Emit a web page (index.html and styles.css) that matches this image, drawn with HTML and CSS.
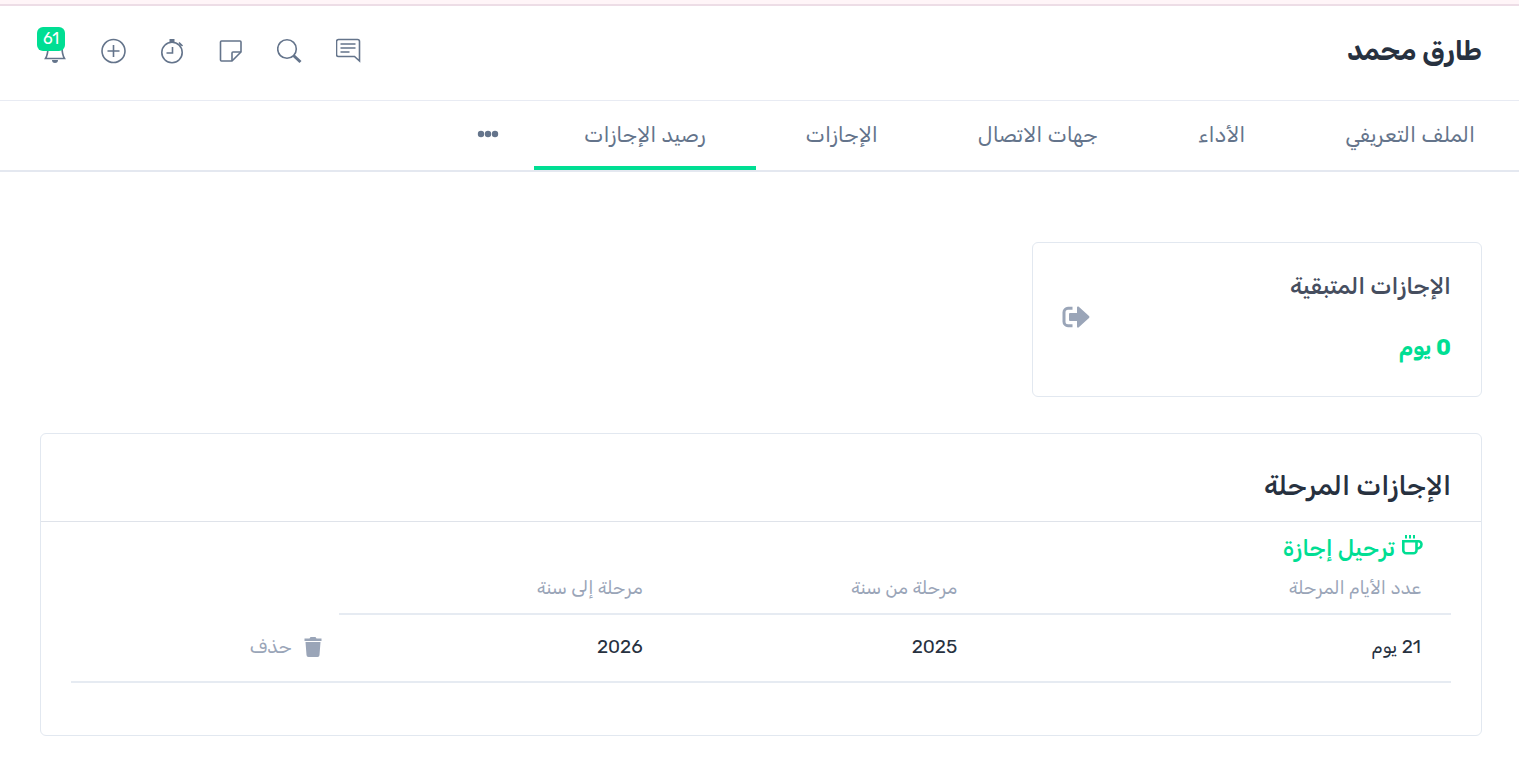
FILE: index.html
```html
<!DOCTYPE html>
<html lang="ar" dir="rtl">
<head>
  <meta charset="utf-8">
  <title>طارق محمد | رصيد الإجازات</title>
  <meta name="viewport" content="width=device-width, initial-scale=1">
  <link rel="stylesheet" href="styles.css">
</head>
<body>
  <div class="top-strip"></div>

  <!-- Header -->
  <header class="header">
    <h1>طارق محمد</h1>
    <div class="toolbar">
      <button class="icon-btn" aria-label="الرسائل">
        <svg width="26" height="26" viewBox="0 0 26 26"><path d="M2.500 1.500h19a2 2 0 0 1 2 2v19.500l-5-4.500h-16a2 2 0 0 1-2-2V3.500a2 2 0 0 1 2-2z"/><path d="M4.500 6h15M4.500 10h15M4.500 14h9"/></svg>
      </button>
      <button class="icon-btn" aria-label="بحث">
        <svg width="26" height="26" viewBox="0 0 26 26"><circle cx="10" cy="11" r="9.300"/><path d="M16.500 17.500l7 6.500" class="thick"/></svg>
      </button>
      <button class="icon-btn" aria-label="ملاحظات">
        <svg width="26" height="26" viewBox="0 0 26 26"><path d="M3.500 3h18.500a1 1 0 0 1 1 1v10l-9 9H3.500a1 1 0 0 1-1-1V4a1 1 0 0 1 1-1z"/><path d="M14 23v-8a1 1 0 0 1 1-1h8"/></svg>
      </button>
      <button class="icon-btn" aria-label="المؤقت">
        <svg width="26" height="26" viewBox="0 0 26 26"><circle cx="13" cy="14.500" r="10.200"/><path d="M13.500 9v6H7.500"/><path d="M10.500 2.500h5" class="thick"/><path d="M20 4.500l3.500 3.500M13 3v2M22 6l-1.500 1.500"/></svg>
      </button>
      <button class="icon-btn" aria-label="إضافة">
        <svg width="26" height="26" viewBox="0 0 26 26"><circle cx="13.500" cy="13" r="11.500"/><path d="M13.500 7v12M7.500 13h12"/></svg>
      </button>
      <button class="icon-btn bell" aria-label="الإشعارات">
        <svg width="26" height="26" viewBox="0 0 26 26"><path d="M14 2a7 7 0 0 0-7 7c0 6-1 9-2.500 11.500h19C22 18 21 15 21 9a7 7 0 0 0-7-7z"/><path d="M11 22h6a3 3 0 0 1-6 0z" class="solid"/></svg>
        <span class="badge">61</span>
      </button>
    </div>
  </header>

  <!-- Tabs -->
  <nav class="tabs">
    <a href="#">الملف التعريفي</a>
    <a href="#">الأداء</a>
    <a href="#">جهات الاتصال</a>
    <a href="#">الإجازات</a>
    <a href="#" class="active">رصيد الإجازات</a>
    <button class="more" aria-label="المزيد">
      <svg width="22" height="8" viewBox="0 0 22 8"><circle cx="4" cy="4" r="3.200"/><circle cx="11" cy="4" r="3.200"/><circle cx="18" cy="4" r="3.200"/></svg>
    </button>
  </nav>

  <main class="content">
    <!-- Remaining leaves -->
    <section class="card balance">
      <div>
        <h3>الإجازات المتبقية</h3>
        <p class="days">0 يوم</p>
      </div>
      <svg class="exit" width="28" height="24" viewBox="0 0 28 24"><path d="M15 2.500q0-1.500 1.500-1L27 11q1 1 0 2L16.500 22.500q-1.500.5-1.500-1v-5.500H8q-1 0-1-1V9q0-1 1-1h7z" class="arrow"/><path d="M10.500 3.300H6a4 4 0 0 0-4 4v9.400a4 4 0 0 0 4 4H10.500"/></svg>
    </section>

    <!-- Carried over leaves -->
    <section class="card carried">
      <h2>الإجازات المرحلة</h2>
      <div class="carried-body">
        <a href="#" class="carry-link">
          <svg width="22" height="28" viewBox="0 0 22 28"><path d="M2.300 7.300h13.200v9a3 3 0 0 1-3 3h-7.200a3 3 0 0 1-3-3z"/><path d="M15.500 7.300h2a3 3 0 0 1 3 3c0 2.700-2 4.200-5 4.200"/><path d="M5 1v3.500M9 1v3.500M13 1v3.500" class="steam"/></svg>
          ترحيل إجازة
        </a>
        <table>
          <thead>
            <tr>
              <th class="col-days">عدد الأيام المرحلة</th>
              <th class="col-from">مرحلة من سنة</th>
              <th class="col-to">مرحلة إلى سنة</th>
              <td class="col-action"></td>
            </tr>
          </thead>
          <tbody>
            <tr>
              <td>21 يوم</td>
              <td>2025</td>
              <td>2026</td>
              <td class="col-action">
                <button class="delete">
                  <svg width="18" height="20" viewBox="0 0 18 20"><path d="M.500 1.500H5.500L6.500 0h5l1 1.500h5V4H.500z"/><path d="M1.500 5h15l-1 13a2 2 0 0 1-2 2h-9a2 2 0 0 1-2-2z"/></svg>
                  حذف
                </button>
              </td>
            </tr>
          </tbody>
        </table>
      </div>
    </section>
  </main>
</body>
</html>
```
FILE: styles.css
```css
* {
  margin: 0;
  padding: 0;
  box-sizing: border-box;
}

body {
  font-family: Rubik, Roboto, "Noto Sans", "Noto Sans Arabic", sans-serif;
  font-size: 19px;
  background: #fff;
  color: #27313f;
}

button {
  font: inherit;
  background: none;
  border: none;
  cursor: pointer;
}

a {
  text-decoration: none;
}

.top-strip {
  height: 6px;
  background: #fff5f8;
  border-bottom: 2px solid #eddde6;
}

.header {
  display: flex;
  align-items: center;
  justify-content: space-between;
  height: 95px;
  padding: 0 37px 4px 41px;
  border-bottom: 1px solid #e8ebf3;
}

h1 {
  font-size: 27px;
  font-weight: 700;
}

.toolbar {
  display: flex;
  gap: 33px;
}

.icon-btn {
  position: relative;
  display: flex;
}

.icon-btn svg {
  fill: none;
  stroke: #64748b;
  stroke-width: 1.6;
}

.icon-btn .thick {
  stroke-width: 3;
}

.icon-btn .solid {
  fill: #64748b;
  stroke: none;
}

.badge {
  position: absolute;
  top: -11px;
  left: -4px;
  width: 28px;
  height: 24px;
  border-radius: 6px;
  background: #00de93;
  color: #fff;
  font-size: 16px;
  font-weight: 400;
  line-height: 24px;
  text-align: center;
}

.tabs {
  display: flex;
  height: 71px;
  padding-right: 44px;
  border-bottom: 2px solid #e4e8f0;
}

.tabs a {
  padding: 0 50px;
  border-bottom: 4px solid transparent;
  color: #64748b;
  font-size: 21px;
  line-height: 68px;
}

.tabs a:first-child {
  padding-right: 0;
}

.tabs a.active {
  border-color: #00de93;
}

.more {
  display: flex;
  align-items: center;
  padding: 0 35px 4px;
}

.more svg {
  fill: #64748b;
}

.content {
  padding: 70px 37px 44px 40px;
}

.card {
  border: 1px solid #e2e8f0;
  border-radius: 6px;
}

.balance {
  display: flex;
  align-items: center;
  justify-content: space-between;
  width: 450px;
  height: 155px;
  padding: 0 30px 5px 29px;
  margin-bottom: 36px;
}

h3 {
  color: #464e5f;
  font-size: 23px;
  font-weight: 500;
  line-height: 32px;
  margin-bottom: 30px;
}

.days {
  color: #00de93;
  font-size: 22px;
  font-weight: 700;
  line-height: 32px;
}

.exit {
  fill: none;
  stroke: #9aa5b8;
  stroke-width: 3;
}

.exit .arrow {
  fill: #9aa5b8;
  stroke: none;
}

h2 {
  height: 88px;
  padding: 32px 30px 0;
  border-bottom: 1px solid #dfe3ea;
  font-size: 27px;
  font-weight: 500;
  line-height: 40px;
}

.carried-body {
  padding: 10px 30px 52px;
}

.carry-link {
  display: flex;
  align-items: center;
  gap: 6px;
  padding-right: 28px;
  color: #00de93;
  font-size: 23px;
  font-weight: 500;
  line-height: 32px;
}

.carry-link svg {
  fill: none;
  stroke: #00de93;
  stroke-width: 2.6;
}

.carry-link .steam {
  stroke-width: 2;
}

table {
  width: 100%;
  table-layout: fixed;
  border-collapse: collapse;
}

th,
td {
  padding: 0 30px 2px;
  text-align: right;
}

th {
  height: 50px;
  border-bottom: 2px solid #e6ebf2;
  color: #9aa5b8;
  font-size: 18px;
  font-weight: 400;
}

tbody td {
  height: 68px;
  padding-bottom: 4px;
  border-bottom: 2px solid #e6ebf2;
}

.col-days {
  width: 33.6%;
}

.col-from {
  width: 22.8%;
}

.col-to {
  width: 24.2%;
}

td.col-action {
  padding: 0 17px 2px;
}

.delete {
  display: flex;
  align-items: center;
  gap: 12px;
  color: #9aa5b8;
}

.delete svg {
  fill: #9aa5b8;
}
```
